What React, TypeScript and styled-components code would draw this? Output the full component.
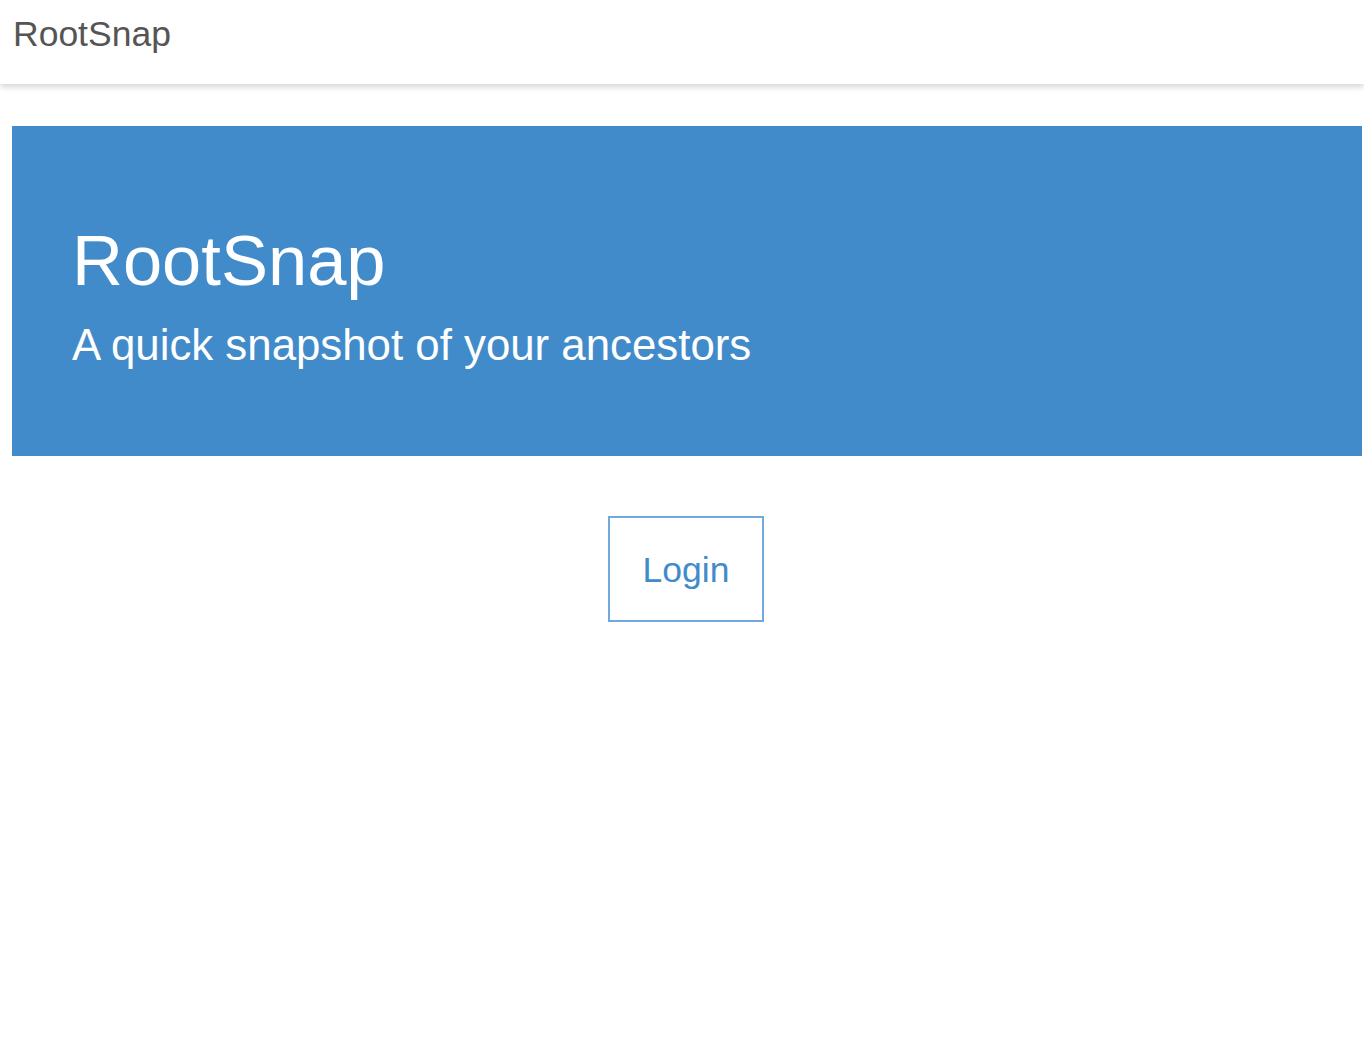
import styled, { createGlobalStyle } from "styled-components";

const GlobalStyle = createGlobalStyle`
    html, body {
        margin: 0;
        padding: 0;
        background: #ffffff;
        font-family: "Liberation Sans", Arial, Helvetica, sans-serif;
    }
`

const Navbar = styled.nav`
    display: flex;
    align-items: center;

    height: 84px;
    padding: 0 13px;
    box-sizing: border-box;

    background-color: #ffffff;
    box-shadow: 0 3px 6px rgba(0, 0, 0, 0.17);

    .brand {
        font-size: 35.5px;
        line-height: 1;
        color: #555555;
        margin-top: -14px;
    }
`

const Container = styled.main`
    display: flex;
    flex-direction: column;
    align-items: center;

    margin: 42px 2px 0 12px;
`

const Jumbotron = styled.section`
    align-self: stretch;

    padding: 96px 60px 80px;
    box-sizing: border-box;

    background-color: #428bca;
    color: #ffffff;

    h1 {
        margin: 0;
        font-size: 70.5px;
        font-weight: normal;
        line-height: 77px;
    }

    p {
        margin: 15px 0 0;
        font-size: 43.8px;
        line-height: 61.6px;
    }
`

const OutlineButton = styled.button`
    display: flex;
    justify-content: center;
    align-items: center;

    width: 156px;
    height: 106px;
    margin: 60px 2px 0 0;
    padding: 4px 0 0;

    background: #ffffff;
    border: 2px solid #72a9dc;

    font-family: "Liberation Sans", Arial, Helvetica, sans-serif;
    font-size: 35.5px;
    color: #428bca;
    cursor: pointer;
`

export default function App() {
    return (
        <>
            <GlobalStyle />
            <Navbar>
                <div className="brand">RootSnap</div>
            </Navbar>

            <Container>
                <Jumbotron>
                    <h1>RootSnap</h1>
                    <p>A quick snapshot of your ancestors</p>
                </Jumbotron>

                <OutlineButton>Login</OutlineButton>
            </Container>
        </>
    )
}
